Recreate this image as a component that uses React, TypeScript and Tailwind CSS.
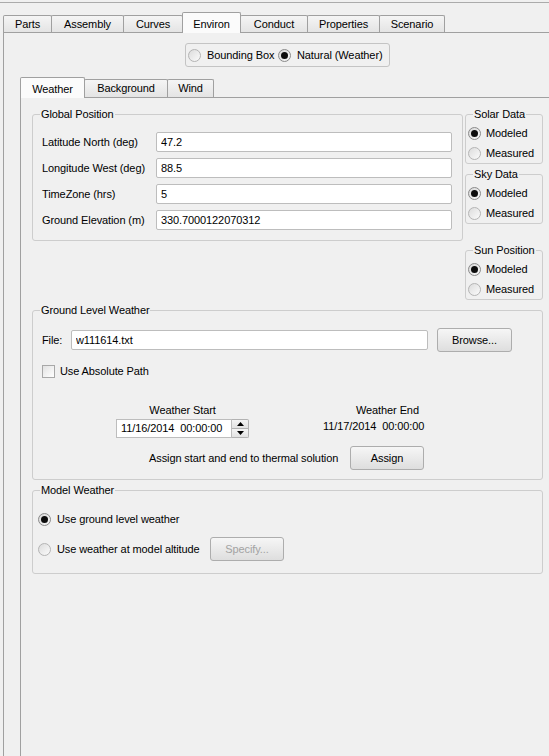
import React from "react";

const outerTabs = [
  { label: "Parts", w: "w-[49px]" },
  { label: "Assembly", w: "w-[73px]" },
  { label: "Curves", w: "w-[60px]" },
  { label: "Environ", w: "w-[59px]", sel: true },
  { label: "Conduct", w: "w-[68px]" },
  { label: "Properties", w: "w-[73px]" },
  { label: "Scenario", w: "w-[66px]" },
];

const innerTabs = [
  { label: "Weather", w: "w-[65px]", sel: true },
  { label: "Background", w: "w-[84px]" },
  { label: "Wind", w: "w-[47px]" },
];

function Tab({ label, w, sel, tall }: { label: string; w: string; sel?: boolean; tall?: boolean }) {
  const base =
    "-ml-px first:ml-0 flex items-center justify-center border border-b-0 border-[#a0a0a0] rounded-t-[2px] ";
  const state = sel
    ? "relative z-10 -mb-px h-[21px] pt-[2px] bg-[#fbfbfb]"
    : tall
    ? "h-[18px] bg-linear-to-b from-[#f5f5f5] to-[#e4e4e4]"
    : "h-[17px] bg-linear-to-b from-[#f5f5f5] to-[#e4e4e4]";
  return <div className={base + state + " " + w}>{label}</div>;
}

function Radio({ checked }: { checked?: boolean }) {
  return (
    <span
      className={
        "flex h-[13px] w-[13px] shrink-0 items-center justify-center rounded-full border " +
        (checked
          ? "border-[#8a8a8a] bg-linear-to-br from-[#d8d8d8] to-[#f8f8f8]"
          : "border-[#b4b4b4] bg-linear-to-br from-[#dcdcdc] to-[#fbfbfb]")
      }
    >
      {checked && <span className="h-[7px] w-[7px] rounded-full bg-[#0c0c0c]" />}
    </span>
  );
}

function Group({
  title,
  className,
  children,
}: {
  title: string;
  className: string;
  children?: React.ReactNode;
}) {
  return (
    <fieldset className={"shrink-0 rounded-[3px] border border-[#cdcdcd] " + className}>
      <legend className="ml-[7px] px-px">{title}</legend>
      {children}
    </fieldset>
  );
}

function Field({ value, className }: { value: string; className: string }) {
  return (
    <input
      readOnly
      value={value}
      className={
        "h-[20px] rounded-[2px] border border-[#bdbdbd] bg-white px-[4px] text-[11px] tracking-[-0.1px] text-black outline-none " +
        className
      }
    />
  );
}

function Button({ label, disabled, className }: { label: string; disabled?: boolean; className: string }) {
  return (
    <div
      className={
        "flex h-[24px] shrink-0 items-center justify-center rounded-[3px] border border-[#adadad] bg-linear-to-b from-[#f6f6f6] to-[#dedede] " +
        (disabled ? "text-[#a3a3a3] " : "text-black ") +
        className
      }
    >
      {label}
    </div>
  );
}

function RadioPair() {
  return (
    <div className="flex flex-col pl-[2px] pt-[2px]">
      <div className="flex h-[20px] items-center gap-[5px]">
        <Radio checked />
        <span>Modeled</span>
      </div>
      <div className="flex h-[20px] items-center gap-[5px]">
        <Radio />
        <span>Measured</span>
      </div>
    </div>
  );
}

export default function App() {
  return (
    <div className="flex h-[756px] w-[549px] flex-col overflow-hidden bg-[#f0f0f0] font-['Liberation_Sans',Arial,sans-serif] text-[11px] leading-[13px] tracking-[-0.1px] text-black">
      <div className="mt-[2px] border-t border-[#ababab]" />
      <div className="ml-[3px] mt-[9px] flex h-[20px] items-end">
        {outerTabs.map((t) => (
          <Tab key={t.label} label={t.label} w={t.w} sel={t.sel} />
        ))}
      </div>
      <div className="ml-[3px] flex w-[580px] flex-1 flex-col border-l border-t border-[#a0a0a0]">
        <div className="ml-[181px] mt-[10px] flex h-[24px] w-[205px] items-center rounded-[3px] border border-[#c4c4c4] pl-[2px]">
          <div className="flex w-[90px] items-center gap-[6px]">
            <Radio />
            <span>Bounding Box</span>
          </div>
          <div className="flex items-center gap-[6px]">
            <Radio checked />
            <span>Natural (Weather)</span>
          </div>
        </div>

        <div className="ml-[16px] mt-[10px] flex h-[20px] items-end">
          {innerTabs.map((t) => (
            <Tab key={t.label} label={t.label} w={t.w} sel={t.sel} tall />
          ))}
        </div>
        <div className="ml-[16px] flex flex-1 flex-col border-l border-t border-[#a0a0a0] pl-[11px] pt-[10px]">
          <div className="flex items-start gap-[2px]">
            <Group title="Global Position" className="h-[133px] w-[431px]">
              <div className="flex flex-col gap-[6px] pl-[9px] pt-[11px]">
                {[
                  ["Latitude North (deg)", "47.2"],
                  ["Longitude West (deg)", "88.5"],
                  ["TimeZone (hrs)", "5"],
                  ["Ground Elevation (m)", "330.7000122070312"],
                ].map(([l, v]) => (
                  <div key={l} className="flex h-[20px] items-center">
                    <span className="w-[114px] shrink-0">{l}</span>
                    <Field value={v} className="w-[296px]" />
                  </div>
                ))}
              </div>
            </Group>
            <div className="flex w-[78px] flex-col">
              <Group title="Solar Data" className="h-[56px] w-[78px]">
                <RadioPair />
              </Group>
              <Group title="Sky Data" className="mt-[4px] h-[56px] w-[78px]">
                <RadioPair />
              </Group>
              <Group title="Sun Position" className="mt-[20px] h-[56px] w-[78px]">
                <RadioPair />
              </Group>
            </div>
          </div>

          <Group title="Ground Level Weather" className="mt-[4px] h-[176px] w-[511px]">
            <div className="mt-[11px] flex h-[24px] items-center pl-[9px]">
              <span className="w-[29px] shrink-0">File:</span>
              <Field value="w111614.txt" className="w-[357px]" />
              <Button label="Browse..." className="ml-[9px] w-[75px]" />
            </div>
            <div className="mt-[13px] flex h-[13px] items-center gap-[5px] pl-[9px]">
              <span className="h-[13px] w-[13px] shrink-0 border border-[#a8a8a8] bg-linear-to-br from-[#e2e2e2] to-white" />
              <span>Use Absolute Path</span>
            </div>
            <div className="mt-[26px] flex items-start pl-[83px]">
              <div className="flex w-[133px] flex-col items-center">
                <span>Weather Start</span>
                <div className="mt-[2px] flex h-[19px] w-[133px]">
                  <div className="flex h-[19px] w-[116px] items-center border border-[#bdbdbd] bg-white pl-[4px]">
                    <span className="whitespace-pre">11/16/2014  00:00:00</span>
                  </div>
                  <div className="flex w-[17px] flex-col">
                    <div className="flex h-[10px] items-center justify-center rounded-tr-[2px] border border-l-0 border-[#b2b2b2] bg-linear-to-b from-[#f4f4f4] to-[#e2e2e2]">
                      <svg width="7" height="4" viewBox="0 0 7 4">
                        <path d="M0 4 L3.5 0 L7 4 Z" fill="#000" />
                      </svg>
                    </div>
                    <div className="flex h-[9px] items-center justify-center rounded-br-[2px] border border-l-0 border-t-0 border-[#b2b2b2] bg-linear-to-b from-[#f4f4f4] to-[#e2e2e2]">
                      <svg width="7" height="4" viewBox="0 0 7 4">
                        <path d="M0 0 L7 0 L3.5 4 Z" fill="#000" />
                      </svg>
                    </div>
                  </div>
                </div>
              </div>
              <div className="ml-[74px] flex flex-col">
                <span className="pl-[33px]">Weather End</span>
                <span className="mt-[3px] whitespace-pre">11/17/2014  00:00:00</span>
              </div>
            </div>
            <div className="mt-[8px] flex h-[24px] items-center pl-[116px]">
              <span className="w-[201px] shrink-0">Assign start and end to thermal solution</span>
              <Button label="Assign" className="w-[74px]" />
            </div>
          </Group>

          <Group title="Model Weather" className="mt-[4px] h-[90px] w-[511px]">
            <div className="pl-[5px]">
              <div className="mt-[10px] flex h-[24px] items-center">
                <Radio checked />
                <span className="ml-[6px]">Use ground level weather</span>
              </div>
              <div className="mt-[6px] flex h-[24px] items-center">
                <Radio />
                <span className="ml-[6px] w-[153px] shrink-0">Use weather at model altitude</span>
                <Button label="Specify..." disabled className="w-[74px]" />
              </div>
            </div>
          </Group>
        </div>
      </div>
    </div>
  );
}
